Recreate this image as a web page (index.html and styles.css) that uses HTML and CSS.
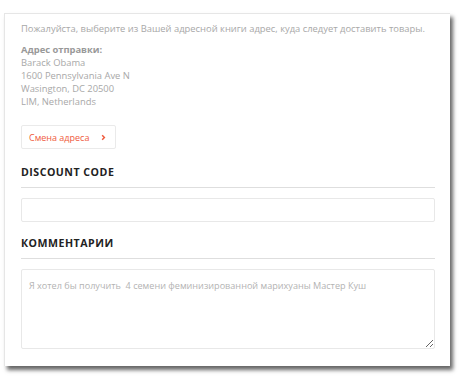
FILE: index.html
```html
<!DOCTYPE html>
<html lang="ru">
<head>
  <meta charset="UTF-8">
  <title>Адрес доставки</title>
  <link rel="stylesheet" href="styles.css">
</head>
<body>
  <div class="card">
    <p class="intro">Пожалуйста, выберите из Вашей адресной книги адрес, куда следует доставить товары.</p>

    <div class="address">
      <strong>Адрес отправки:</strong>
      <span>Barack Obama</span>
      <span>1600 Pennsylvania Ave N</span>
      <span>Wasington, DC 20500</span>
      <span>LIM, Netherlands</span>
    </div>

    <a href="#" class="change-btn">
      Смена адреса
      <svg class="chevron" viewBox="0 0 8 8"><path d="M2.5 1.5 5 4 2.5 6.5" /></svg>
    </a>

    <h3 class="section-title">Discount code</h3>
    <input type="text" class="field">

    <h3 class="section-title">Комментарии</h3>
    <textarea class="field area" placeholder="Я хотел бы получить  4 семени феминизированной марихуаны Мастер Куш"></textarea>
  </div>
</body>
</html>
```

FILE: styles.css
```css
* {
  margin: 0;
  padding: 0;
  box-sizing: border-box;
}

html,
body {
  min-height: 100%;
}

body {
  min-height: 100vh;
  padding: 13px 0 13px 4px;
  background: #fff;
  font-family: 'Open Sans', 'Noto Sans', sans-serif;
  color: #999;
}

.card {
  width: 446px;
  height: 353px;
  padding: 7px 15px 0 16px;
  background: #fff;
  border: 1px solid #e6e6e6;
  border-right: none;
  border-bottom: none;
  box-shadow: 3px 4px 4px rgba(0, 0, 0, 0.6);
  display: flex;
  flex-direction: column;
}

.intro {
  font-size: 9.4px;
  line-height: 16px;
  color: #a8a8a8;
  margin-bottom: 6px;
}

.address {
  display: flex;
  flex-direction: column;
  font-size: 9.4px;
  line-height: 13px;
  color: #a8a8a8;
}

.address strong {
  font-weight: 700;
  color: #999;
}

.change-btn {
  align-self: flex-start;
  display: flex;
  align-items: center;
  justify-content: space-between;
  white-space: nowrap;
  margin-top: 17px;
  height: 24px;
  width: 95px;
  padding: 0 8px 0 7px;
  border: 1px solid #eaeaea;
  border-radius: 2px;
  font-size: 9px;
  color: #ef5a3c;
  text-decoration: none;
}

.chevron {
  width: 7px;
  height: 7px;
  fill: none;
  stroke: #ef5a3c;
  stroke-width: 1.7;
}

.section-title {
  font-size: 10.6px;
  font-weight: 700;
  letter-spacing: 0.5px;
  text-transform: uppercase;
  color: #222;
  line-height: 16px;
  padding-bottom: 7px;
  border-bottom: 1px solid #dedede;
  margin-bottom: 10px;
}

.change-btn + .section-title {
  margin-top: 15px;
}

.field + .section-title {
  margin-top: 13px;
}

.field {
  width: 100%;
  height: 24px;
  border: 1px solid #e8e8e8;
  border-radius: 2px;
  background: #fff;
  font-family: inherit;
  font-size: 9.1px;
  outline: none;
}

.area {
  height: 80px;
  padding: 9px 7px;
  color: #999;
  resize: vertical;
}

.area::placeholder {
  color: #b3b3b3;
}
```
